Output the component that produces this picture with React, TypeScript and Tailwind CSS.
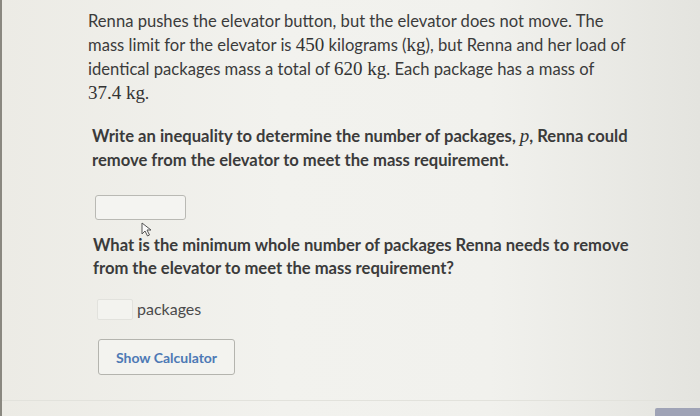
import { ReactNode } from 'react';

const Math = ({ children }: { children: ReactNode }) => (
  <span className="font-['Liberation_Serif',serif] text-[19px] leading-none whitespace-nowrap text-[#333]">{children}</span>
);

export default function App() {
  return (
    <div className="w-[700px] h-[416px] overflow-hidden border-l-2 border-[#8a8880] bg-[linear-gradient(90deg,#ecebe5_0%,#f2f2ee_40%,#f1f1ed_70%,#e4e4df_100%)] font-['Lato',sans-serif] text-[#3b3b3b] flex flex-col">
      <div className="flex-1 pl-[86px] pt-[9px]">
        <p className="w-[552px] text-[16.6px] leading-[24px]">
          Renna pushes the elevator button, but the elevator does not move. The mass limit for the elevator is{' '}
          <Math>450</Math> kilograms (<Math>kg</Math>), but Renna and her load of identical packages mass a total of{' '}
          <Math>620 kg</Math>. Each package has a mass of <Math>37.4 kg</Math>.
        </p>

        <p className="mt-[19px] ml-[4px] w-[560px] text-[16.6px] leading-[24px] font-bold">
          Write an inequality to determine the number of packages, <Math><i className="font-normal">p</i></Math>, Renna could remove from the elevator to meet the mass requirement.
        </p>

        <div className="relative mt-[23px] ml-[7px] w-[91px] h-[25px] rounded-[3px] border border-[#b9b9b4] bg-[#f4f4f1]">
          <svg className="absolute left-[45px] top-[26px]" width="12" height="16" viewBox="0 0 12 16">
            <path d="M1 1 L1 12 L4 9 L6.5 14 L8.5 13 L6 8 L10 8 Z" fill="#fafafa" stroke="#555" strokeWidth="1" strokeLinejoin="round" />
          </svg>
        </div>

        <p className="mt-[14px] ml-[5px] w-[560px] text-[16.6px] leading-[23px] font-bold">
          What is the minimum whole number of packages Renna needs to remove from the elevator to meet the mass requirement?
        </p>

        <div className="mt-[17px] ml-[9px] flex items-center gap-[4px]">
          <div className="w-[36px] h-[21px] rounded-[2px] border border-[#e2e2dd] bg-[#f3f3ef]" />
          <span className="text-[16px] text-[#4a4a4a]">packages</span>
        </div>

        <button className="mt-[18px] ml-[10px] w-[137px] h-[36px] rounded-[3px] border border-[#b4b4ae] bg-[#f3f3ef] text-[14px] font-bold text-[#4d79b5]">
          Show Calculator
        </button>
      </div>
      <div className="h-[16px] flex items-end justify-end border-t border-[#e2e2dc]">
        <div className="w-[45px] h-[8px] bg-[#9fa3b6] rounded-tl-[2px]" />
      </div>
    </div>
  );
}
